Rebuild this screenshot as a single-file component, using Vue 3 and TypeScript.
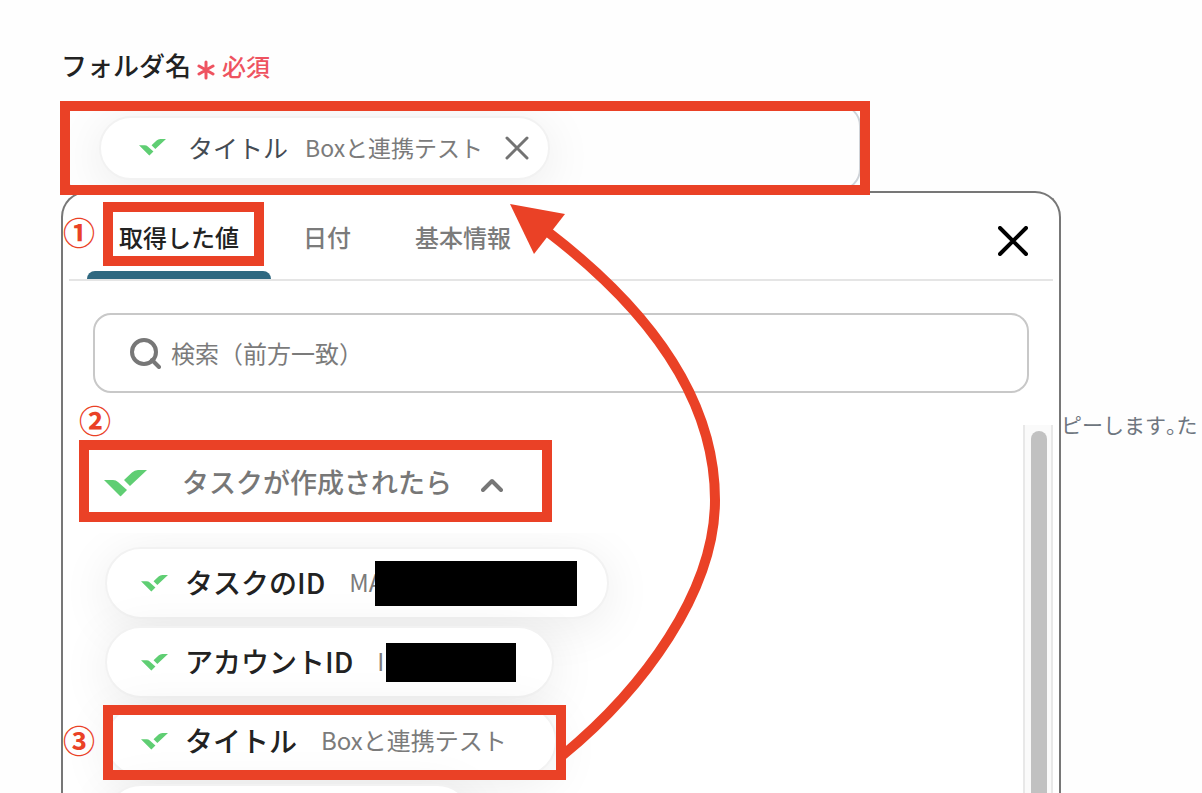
<script setup lang="ts">
import { computed, defineComponent, h, ref } from 'vue'

interface Item {
  id: string
  label: string
  value: string
  redacted?: string
}

const WrikeMark = defineComponent({
  name: 'WrikeMark',
  setup() {
    return () =>
      h('svg', { viewBox: '0 0 43 27', 'aria-hidden': 'true', fill: '#5fce73' }, [
        h('path', { d: 'M0 10H9Q12 10 14 12L23 20L17 26Q16.500 26.500 16 26Z' }),
        h('path', { d: 'M20 10L28 2.500Q30.500 0 34 0H43L26 16Z' }),
      ])
  },
})

const tabs = ['取得した値', '日付', '基本情報']
const activeTab = ref(tabs[0])
const query = ref('')
const expanded = ref(true)

const items: Item[] = [
  { id: 'task', label: 'タスクのID', value: 'MA', redacted: 'wide' },
  { id: 'account', label: 'アカウントID', value: 'IE', redacted: 'narrow' },
  { id: 'title', label: 'タイトル', value: 'Boxと連携テスト' },
]

const visibleItems = computed(() => (expanded.value ? items.filter((i) => i.label.startsWith(query.value)) : []))
</script>

<template>
  <main class="page">
    <div class="label-row">
      <h1 class="label">フォルダ名</h1>
      <svg class="asterisk" viewBox="0 0 18 20" aria-hidden="true">
        <path d="M9 2V18M2 6L16 14M16 6L2 14" />
      </svg>
      <span class="required">必須</span>
    </div>

    <div class="field">
      <div class="chip selected">
        <WrikeMark class="mark" />
        <span class="chip-label">タイトル</span>
        <span class="chip-value">Boxと連携テスト</span>
        <button class="remove" type="button" aria-label="タイトルを削除">
          <svg viewBox="0 0 24 24"><path d="M2 2L22 22M22 2L2 22" /></svg>
        </button>
      </div>
    </div>

    <div class="below">
      <section class="picker">
        <header class="tabbar">
          <nav class="tabs">
            <button
              v-for="tab in tabs"
              :key="tab"
              type="button"
              class="tab"
              :class="{ active: tab === activeTab }"
              @click="activeTab = tab"
            >
              {{ tab }}
            </button>
          </nav>
          <button class="close" type="button" aria-label="閉じる">
            <svg viewBox="0 0 30 30"><path d="M2 2L28 28M28 2L2 28" /></svg>
          </button>
        </header>

        <label class="search">
          <svg viewBox="0 0 32 32" aria-hidden="true">
            <circle cx="15" cy="15" r="12" />
            <path d="M23 23L30 30" />
          </svg>
          <input v-model="query" type="text" placeholder="検索（前方一致）" aria-label="検索" />
        </label>

        <div class="results">
          <div class="list">
            <button class="group" type="button" :aria-expanded="expanded" @click="expanded = !expanded">
              <WrikeMark class="mark large" />
              <span>タスクが作成されたら</span>
              <svg class="chevron" viewBox="0 0 22 14" aria-hidden="true"><path d="M2 12L11 3L20 12" /></svg>
            </button>
            <div class="items">
              <button v-for="item in visibleItems" :key="item.id" type="button" class="chip">
                <WrikeMark class="mark" />
                <span class="chip-label">{{ item.label }}</span>
                <span class="chip-value">{{ item.value }}</span>
                <span v-if="item.redacted" class="redaction" :class="item.redacted"></span>
              </button>
              <div class="chip pending" aria-hidden="true"></div>
            </div>
          </div>
          <div class="track"><div class="thumb"></div></div>
        </div>
      </section>
      <p class="note">ピーします<span class="stop">。</span>た</p>
    </div>

    <div class="annotations">
      <div class="frame frame-field"></div>
      <div class="frame frame-tab"></div>
      <div class="frame frame-group"></div>
      <div class="frame frame-item"></div>
      <span class="step step-1">①</span>
      <span class="step step-2">②</span>
      <span class="step step-3">③</span>
      <svg class="arrow" viewBox="0 0 220 560" aria-hidden="true">
        <path class="curve" d="M53 551C133 485 205 388 205 296C205 200 145 110 38 28" />
        <path class="head" d="M0 0L55 10L24 50Z" />
      </svg>
    </div>
  </main>
</template>

<style>
body {
  margin: 0;
  background: #fefefe;
}
</style>

<style scoped>
.page {
  position: relative;
  box-sizing: border-box;
  height: 100vh;
  overflow: hidden;
  display: flex;
  flex-direction: column;
  padding: 46px 0 0 61px;
  font-family: 'Noto Sans CJK JP', sans-serif;
  color: #222;
}
button {
  font: inherit;
  color: inherit;
  background: none;
  border: 0;
  margin: 0;
  padding: 0;
  cursor: pointer;
}
svg {
  display: block;
  flex: none;
}
.label-row {
  display: flex;
  align-items: center;
  height: 40px;
  color: #ee5360;
}
.label {
  margin: 0;
  padding-bottom: 2px;
  font-size: 26px;
  line-height: 38px;
  font-weight: 500;
  color: #222;
}
.asterisk {
  width: 18px;
  height: 20px;
  margin: 8px 7px 0 6px;
  fill: none;
  stroke: currentColor;
  stroke-width: 3;
  stroke-linecap: round;
}
.required {
  font-size: 24px;
  line-height: 40px;
  font-weight: 500;
}
.field {
  box-sizing: border-box;
  display: flex;
  align-items: center;
  height: 87px;
  margin: 18px 341px 0 0;
  padding-left: 36px;
  border: 2px solid #cfd3d8;
  border-radius: 22px;
  overflow: hidden;
}
.chip {
  position: relative;
  box-sizing: border-box;
  display: flex;
  align-items: center;
  height: 72px;
  padding: 0 48px 0 34px;
  border: 2px solid #f2f2f2;
  border-radius: 36px;
  background: #fff;
  box-shadow: 0 8px 50px rgba(0, 0, 0, 0.08);
  white-space: nowrap;
}
.mark {
  width: 27px;
  height: 17px;
}
.mark.large {
  width: 43px;
  height: 27px;
}
.chip-label {
  margin: 0 24px 0 17px;
  padding-bottom: 2px;
  font-size: 28px;
  line-height: 38px;
  font-weight: 500;
}
.chip-value {
  padding-bottom: 2px;
  font-size: 24px;
  line-height: 38px;
  color: #7b7b7b;
}
.selected {
  height: 64px;
  padding: 0 19px 0 38px;
}
.selected .chip-label {
  margin: 0 17px 0 22px;
  font-size: 25px;
  font-weight: 400;
  color: #444b53;
}
.selected .chip-value {
  font-size: 23px;
}
.remove {
  margin-left: 22px;
}
.remove svg {
  width: 24px;
  height: 24px;
  fill: none;
  stroke: #737373;
  stroke-width: 3;
  stroke-linecap: round;
}
.below {
  flex: 1;
  min-height: 0;
  display: flex;
}
.picker {
  flex: 1;
  min-width: 0;
  display: flex;
  flex-direction: column;
  border: 2px solid #777;
  border-bottom: 0;
  border-radius: 26px 26px 0 0;
  background: #fff;
}
.tabbar {
  display: flex;
  align-items: flex-end;
  justify-content: space-between;
  height: 86px;
  margin: 0 6px;
  padding: 0 25px 0 18px;
  border-bottom: 2px solid #e5e5e5;
}
.tabs {
  display: flex;
}
.tab {
  height: 86px;
  padding: 2px 32px 0;
  border-bottom: 0;
  font-size: 24px;
  line-height: 36px;
  font-weight: 500;
  color: #7b7b7b;
}
.tab.active {
  position: relative;
  color: #222;
}
.tab.active::after {
  content: '';
  position: absolute;
  left: 0;
  right: 0;
  bottom: 0;
  height: 8px;
  border-radius: 8px 8px 0 0;
  background: #2f6880;
}
.close {
  margin-bottom: 23px;
}
.close svg {
  width: 30px;
  height: 30px;
  fill: none;
  stroke: #000;
  stroke-width: 4;
  stroke-linecap: round;
}
.search {
  display: flex;
  align-items: center;
  box-sizing: border-box;
  height: 80px;
  margin: 32px 30px 0;
  padding: 0 34px;
  gap: 10px;
  border: 2px solid #c8c8c8;
  border-radius: 18px;
}
.search svg {
  width: 32px;
  height: 32px;
  fill: none;
  stroke: #777;
  stroke-width: 4;
  stroke-linecap: round;
}
.search input {
  flex: 1;
  min-width: 0;
  padding: 0;
  border: 0;
  outline: 0;
  background: none;
  font: inherit;
  font-size: 24px;
  line-height: 36px;
  color: #222;
}
.search input::placeholder {
  color: #7b7b7b;
  opacity: 1;
}
.results {
  flex: 1;
  min-height: 0;
  display: flex;
  margin: 32px 6px 0 0;
}
.list {
  flex: 1;
  min-width: 0;
  display: flex;
  flex-direction: column;
  overflow: hidden;
}
.group {
  display: flex;
  align-items: center;
  flex: none;
  height: 108px;
  padding: 8px 0 0 41px;
  font-size: 27px;
  line-height: 38px;
  font-weight: 500;
  color: #777;
}
.group span {
  margin: 0 29px 0 35px;
  padding-bottom: 2px;
}
.chevron {
  width: 22px;
  height: 14px;
  margin-top: 4px;
  fill: none;
  stroke: #777;
  stroke-width: 4;
  stroke-linecap: round;
  stroke-linejoin: round;
}
.items {
  flex: 1;
  min-height: 0;
  display: flex;
  flex-direction: column;
  align-items: flex-start;
  gap: 7px;
  padding: 14px 0 0 42px;
  overflow: hidden;
}
.items .chip {
  flex: none;
}
.items .chip:has(.redaction) {
  padding-right: 30px;
}
.pending {
  width: 368px;
}
.redaction {
  position: relative;
  height: 45px;
  background: #000;
}
.wide {
  width: 202px;
  margin-left: -8px;
}
.narrow {
  width: 130px;
  height: 39px;
  margin-left: -12px;
  margin-right: 6px;
}
.track {
  box-sizing: border-box;
  width: 30px;
  padding: 6px 4px 0 6px;
  border: solid #e8e8e8;
  border-width: 0 2px;
  background: #fafafa;
}
.thumb {
  width: 16px;
  height: 100%;
  border-radius: 8px 8px 0 0;
  background: #c1c1c1;
}
.note {
  flex: none;
  width: 141px;
  margin: 217px 0 0;
  font-size: 21px;
  line-height: 32px;
  color: #6e7680;
  white-space: nowrap;
}
.stop {
  font-feature-settings: 'halt';
}
.annotations {
  position: absolute;
  inset: 0;
  pointer-events: none;
  color: #ea4126;
}
.frame {
  position: absolute;
  box-sizing: border-box;
  border: 10px solid currentColor;
}
.frame-field {
  left: 60px;
  right: 332px;
  top: 101px;
  height: 94px;
}
.frame-tab {
  left: 103px;
  top: 202px;
  width: 161px;
  height: 64px;
}
.frame-group {
  left: 79px;
  top: 440px;
  width: 473px;
  height: 82px;
}
.frame-item {
  left: 103px;
  top: 705px;
  width: 463px;
  height: 75px;
}
.step {
  position: absolute;
  font-size: 32px;
  line-height: 40px;
  font-weight: 700;
}
.step-1 {
  left: 63px;
  top: 211px;
}
.step-2 {
  left: 79px;
  top: 399px;
}
.step-3 {
  left: 63px;
  top: 719px;
}
.arrow {
  position: absolute;
  left: 510px;
  top: 204px;
  width: 220px;
  height: 560px;
}
.curve {
  fill: none;
  stroke: currentColor;
  stroke-width: 10;
}
.head {
  fill: currentColor;
}
</style>
